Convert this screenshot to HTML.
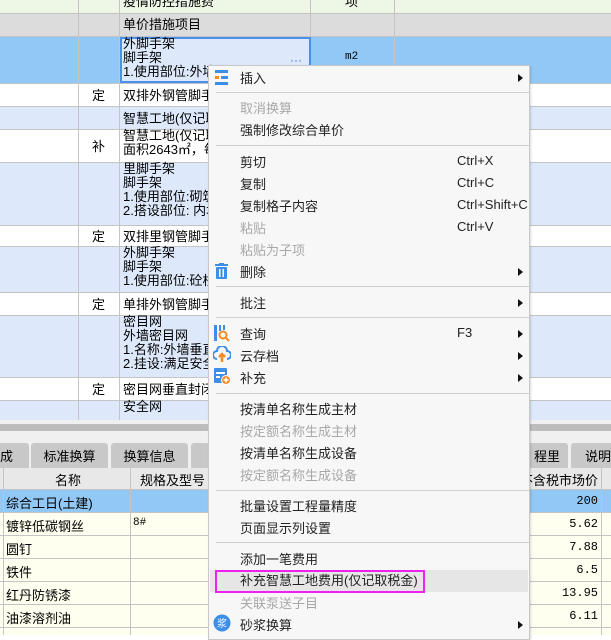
<!DOCTYPE html>
<html><head><meta charset="utf-8"><style>
*{margin:0;padding:0;box-sizing:border-box}
body{width:611px;height:635px;overflow:hidden;position:relative;background:#fff;font-family:"Liberation Sans","Noto Sans CJK SC",sans-serif;font-size:13px;color:#000}
.a{position:absolute}
.u{margin-top:-2px}
.m{position:absolute;left:240px;font-size:13px;color:#222;white-space:nowrap;margin-top:-2px}
.d{color:#a8a8a8}
.s{position:absolute;left:216px;width:313px;height:1px;background:#d0d0d0}
.k{position:absolute;left:457px;color:#222;margin-top:-1px}
.r{position:absolute;left:518px;width:0;height:0;border-top:4px solid transparent;border-bottom:4px solid transparent;border-left:5px solid #111}
</style></head><body>
<div class="a" style="left:0;top:0;width:611px;height:14px;background:#eef7e6"></div>
<div class="a" style="left:0;top:14px;width:611px;height:23px;background:#dcdcdc"></div>
<div class="a" style="left:0;top:37px;width:611px;height:47px;background:#91c8f5"></div>
<div class="a" style="left:0;top:107px;width:611px;height:23px;background:#dde9fb"></div>
<div class="a" style="left:0;top:163px;width:611px;height:63px;background:#dde9fb"></div>
<div class="a" style="left:0;top:247px;width:611px;height:46px;background:#dde9fb"></div>
<div class="a" style="left:0;top:316px;width:611px;height:62px;background:#dde9fb"></div>
<div class="a" style="left:0;top:401px;width:611px;height:20px;background:#dde9fb"></div>
<div class="a" style="left:0;top:84px;width:611px;height:23px;background:#fff"></div>
<div class="a" style="left:0;top:130px;width:611px;height:33px;background:#fff"></div>
<div class="a" style="left:0;top:226px;width:611px;height:21px;background:#fff"></div>
<div class="a" style="left:0;top:293px;width:611px;height:23px;background:#fff"></div>
<div class="a" style="left:0;top:378px;width:611px;height:23px;background:#fff"></div>
<div class="a" style="left:0;top:13px;width:611px;height:1px;background:#c4c4c4"></div>
<div class="a" style="left:0;top:36px;width:611px;height:1px;background:#c4c4c4"></div>
<div class="a" style="left:0;top:83px;width:611px;height:1px;background:#c4c4c4"></div>
<div class="a" style="left:0;top:106px;width:611px;height:1px;background:#c4c4c4"></div>
<div class="a" style="left:0;top:129px;width:611px;height:1px;background:#c4c4c4"></div>
<div class="a" style="left:0;top:162px;width:611px;height:1px;background:#c4c4c4"></div>
<div class="a" style="left:0;top:225px;width:611px;height:1px;background:#c4c4c4"></div>
<div class="a" style="left:0;top:246px;width:611px;height:1px;background:#c4c4c4"></div>
<div class="a" style="left:0;top:292px;width:611px;height:1px;background:#c4c4c4"></div>
<div class="a" style="left:0;top:315px;width:611px;height:1px;background:#c4c4c4"></div>
<div class="a" style="left:0;top:377px;width:611px;height:1px;background:#c4c4c4"></div>
<div class="a" style="left:0;top:400px;width:611px;height:1px;background:#c4c4c4"></div>
<div class="a" style="left:78px;top:0;width:1px;height:421px;background:#c4c4c4"></div>
<div class="a" style="left:119px;top:0;width:1px;height:421px;background:#c4c4c4"></div>
<div class="a" style="left:310px;top:0;width:1px;height:421px;background:#c4c4c4"></div>
<div class="a" style="left:394px;top:0;width:1px;height:421px;background:#c4c4c4"></div>
<div class="a" style="left:120px;top:37px;width:191px;height:46px;background:#dde9fb;border:2px solid #4a90e8"></div>
<div class="a" style="left:290px;top:53px;color:#3a7bd5;font-size:12px">···</div>
<div class="a" style="left:123px;top:-9px;font-size:13px">疫情防控措施费</div>
<div class="a" style="left:345px;top:-9px;font-size:13px">项</div>
<div class="a u" style="left:123px;top:16px">单价措施项目</div>
<div class="a u" style="left:123px;top:39px;line-height:14px">外脚手架<br>脚手架<br>1.使用部位:外墙</div>
<div class="a u" style="left:345px;top:53px;font-family:'Liberation Mono',monospace;font-size:11px">m2</div>
<div class="a u" style="left:92px;top:87px">定</div><div class="a u" style="left:123px;top:87px">双排外钢管脚手架</div>
<div class="a u" style="left:123px;top:110px">智慧工地(仅记取</div>
<div class="a u" style="left:92px;top:138px">补</div><div class="a u" style="left:123px;top:131px;line-height:14px">智慧工地(仅记取<br>面积2643㎡，每平</div>
<div class="a u" style="left:123px;top:164px;line-height:14px">里脚手架<br>脚手架<br>1.使用部位:砌筑<br>2.搭设部位: 内墙</div>
<div class="a u" style="left:92px;top:228px">定</div><div class="a u" style="left:123px;top:228px">双排里钢管脚手架</div>
<div class="a u" style="left:123px;top:248px;line-height:14px">外脚手架<br>脚手架<br>1.使用部位:砼柱</div>
<div class="a u" style="left:92px;top:296px">定</div><div class="a u" style="left:123px;top:296px">单排外钢管脚手架</div>
<div class="a u" style="left:123px;top:317px;line-height:14px">密目网<br>外墙密目网<br>1.名称:外墙垂直<br>2.挂设:满足安全</div>
<div class="a u" style="left:92px;top:381px">定</div><div class="a u" style="left:123px;top:381px">密目网垂直封闭</div>
<div class="a u" style="left:123px;top:402px;line-height:14px">安全网</div>
<div class="a" style="left:0;top:420px;width:611px;height:18px;background:#f0f0f0"></div>
<div class="a" style="left:0;top:424px;width:611px;height:7px;background:#bdbdbd"></div>
<div class="a" style="left:0;top:438px;width:611px;height:30px;background:#f0f0f0"></div>
<div class="a" style="left:-10px;top:443px;width:39px;height:25px;background:#c8c8c8;border-radius:3px 3px 0 0;padding:3px 0 0 10px">成</div>
<div class="a" style="left:31px;top:443px;width:77px;height:25px;background:#c8c8c8;border-radius:3px 3px 0 0;text-align:center;padding-top:3px">标准换算</div>
<div class="a" style="left:111px;top:443px;width:77px;height:25px;background:#c8c8c8;border-radius:3px 3px 0 0;text-align:center;padding-top:3px">换算信息</div>
<div class="a" style="left:191px;top:443px;width:30px;height:25px;background:#c8c8c8;border-radius:3px 3px 0 0"></div>
<div class="a" style="left:500px;top:443px;width:68px;height:25px;background:#c8c8c8;border-radius:3px 3px 0 0;text-align:right;padding:3px 8px 0 0">程里</div>
<div class="a" style="left:571px;top:443px;width:50px;height:25px;background:#c8c8c8;border-radius:3px 3px 0 0;padding:3px 0 0 14px">说明</div>
<div class="a" style="left:0;top:468px;width:611px;height:22px;background:#e8e8e8;border-bottom:1px solid #c4c4c4"></div>
<div class="a" style="left:55px;top:470px">名称</div>
<div class="a" style="left:140px;top:470px">规格及型号</div>
<div class="a" style="left:520px;top:470px">不含税市场价</div>
<div class="a" style="left:0;top:490px;width:611px;height:23px;background:#91c8f5"></div>
<div class="a" style="left:0;top:513px;width:611px;height:122px;background:#fffff0"></div>
<div class="a" style="left:0;top:512px;width:611px;height:1px;background:#c4c4c4"></div>
<div class="a" style="left:0;top:535px;width:611px;height:1px;background:#c4c4c4"></div>
<div class="a" style="left:0;top:558px;width:611px;height:1px;background:#c4c4c4"></div>
<div class="a" style="left:0;top:581px;width:611px;height:1px;background:#c4c4c4"></div>
<div class="a" style="left:0;top:604px;width:611px;height:1px;background:#c4c4c4"></div>
<div class="a" style="left:0;top:627px;width:611px;height:1px;background:#c4c4c4"></div>
<div class="a" style="left:3px;top:468px;width:1px;height:167px;background:#c4c4c4"></div>
<div class="a" style="left:130px;top:468px;width:1px;height:167px;background:#c4c4c4"></div>
<div class="a" style="left:601px;top:468px;width:1px;height:167px;background:#c4c4c4"></div>
<div class="a" style="left:6px;top:493px">综合工日(土建)</div>
<div class="a" style="left:6px;top:516px">镀锌低碳钢丝</div>
<div class="a" style="left:133px;top:517px;font-family:'Liberation Mono',monospace;font-size:11px">8#</div>
<div class="a" style="left:6px;top:539px">圆钉</div>
<div class="a" style="left:6px;top:562px">铁件</div>
<div class="a" style="left:6px;top:585px">红丹防锈漆</div>
<div class="a" style="left:6px;top:608px">油漆溶剂油</div>
<div class="a" style="left:540px;top:494px;width:58px;text-align:right;font-family:'Liberation Mono',monospace;font-size:12px">200</div>
<div class="a" style="left:540px;top:517px;width:58px;text-align:right;font-family:'Liberation Mono',monospace;font-size:12px">5.62</div>
<div class="a" style="left:540px;top:540px;width:58px;text-align:right;font-family:'Liberation Mono',monospace;font-size:12px">7.88</div>
<div class="a" style="left:540px;top:563px;width:58px;text-align:right;font-family:'Liberation Mono',monospace;font-size:12px">6.5</div>
<div class="a" style="left:540px;top:586px;width:58px;text-align:right;font-family:'Liberation Mono',monospace;font-size:12px">13.95</div>
<div class="a" style="left:540px;top:609px;width:58px;text-align:right;font-family:'Liberation Mono',monospace;font-size:12px">6.11</div>

<div class="a" style="left:208px;top:65px;width:322px;height:575px;background:#f7f7f7;border:1px solid #c8c8c8;box-shadow:1px 1px 2px rgba(0,0,0,.15)"></div>
<svg class="a" style="left:214px;top:69px" width="16" height="18"><rect x="1" y="1" width="13" height="3" fill="#3d8ee8"/><rect x="1" y="7" width="4" height="3" fill="#f28c28"/><rect x="7" y="7" width="7" height="3" fill="#3d8ee8"/><rect x="1" y="13" width="13" height="3" fill="#3d8ee8"/></svg>
<div class="m" style="top:70px">插入</div><div class="r" style="top:74px"></div>
<div class="s" style="top:92px"></div>
<div class="m d" style="top:100px">取消换算</div>
<div class="m" style="top:122px">强制修改综合单价</div>
<div class="s" style="top:145px"></div>
<div class="m" style="top:154px">剪切</div><div class="k" style="top:154px">Ctrl+X</div>
<div class="m" style="top:176px">复制</div><div class="k" style="top:176px">Ctrl+C</div>
<div class="m" style="top:198px">复制格子内容</div><div class="k" style="top:198px">Ctrl+Shift+C</div>
<div class="m d" style="top:220px">粘贴</div><div class="k d" style="top:220px">Ctrl+V</div>
<div class="m d" style="top:242px">粘贴为子项</div>
<svg class="a" style="left:214px;top:263px" width="16" height="17"><rect x="1" y="1" width="13" height="2" fill="#3d8ee8"/><rect x="5" y="0" width="5" height="2" fill="#3d8ee8"/><rect x="2" y="4" width="11" height="12" rx="1" fill="#3d8ee8"/><rect x="5" y="6" width="1.5" height="8" fill="#fff"/><rect x="8.5" y="6" width="1.5" height="8" fill="#fff"/></svg>
<div class="m" style="top:264px">删除</div><div class="r" style="top:268px"></div>
<div class="s" style="top:286px"></div>
<div class="m" style="top:295px">批注</div><div class="r" style="top:299px"></div>
<div class="s" style="top:317px"></div>
<svg class="a" style="left:214px;top:325px" width="16" height="17"><rect x="0" y="0" width="3" height="16" fill="#3d8ee8"/><rect x="5" y="0" width="2" height="6" fill="#3d8ee8"/><rect x="9" y="0" width="2" height="5" fill="#3d8ee8"/><circle cx="9" cy="10" r="3.5" fill="none" stroke="#f28c28" stroke-width="2"/><line x1="11.5" y1="12.5" x2="15" y2="16" stroke="#f28c28" stroke-width="2"/></svg>
<div class="m" style="top:326px">查询</div><div class="k" style="top:326px">F3</div><div class="r" style="top:330px"></div>
<svg class="a" style="left:213px;top:346px" width="18" height="17"><path d="M4 13 A4 4 0 0 1 4 5 A5 5 0 0 1 14 5 A4 4 0 0 1 14 13" fill="none" stroke="#3d8ee8" stroke-width="2"/><path d="M9 16 V9 M6 11 L9 8 L12 11" fill="none" stroke="#f28c28" stroke-width="2.5"/></svg>
<div class="m" style="top:348px">云存档</div><div class="r" style="top:352px"></div>
<svg class="a" style="left:214px;top:368px" width="17" height="17"><rect x="0" y="0" width="13" height="15" rx="1" fill="#3d8ee8"/><rect x="2" y="4" width="9" height="2" fill="#fff"/><rect x="2" y="8" width="4" height="2" fill="#fff"/><circle cx="12" cy="12" r="4.5" fill="#f28c28" stroke="#fff" stroke-width="1"/><path d="M12 9.5v5M9.5 12h5" stroke="#fff" stroke-width="1.5"/></svg>
<div class="m" style="top:370px">补充</div><div class="r" style="top:374px"></div>
<div class="s" style="top:393px"></div>
<div class="m" style="top:401px">按清单名称生成主材</div>
<div class="m d" style="top:423px">按定额名称生成主材</div>
<div class="m" style="top:445px">按清单名称生成设备</div>
<div class="m d" style="top:467px">按定额名称生成设备</div>
<div class="s" style="top:490px"></div>
<div class="m" style="top:498px">批量设置工程量精度</div>
<div class="m" style="top:520px">页面显示列设置</div>
<div class="s" style="top:542px"></div>
<div class="m" style="top:551px">添加一笔费用</div>
<div class="a" style="left:210px;top:570px;width:318px;height:22px;background:#e6e6e6"></div>
<div class="a" style="left:215px;top:570px;width:210px;height:23px;border:2px solid #f020f0"></div>
<div class="m" style="top:572px">补充智慧工地费用(仅记取税金)</div>
<div class="m d" style="top:595px">关联泵送子目</div>
<svg class="a" style="left:213px;top:614px" width="18" height="18"><circle cx="9" cy="9" r="8.5" fill="#3d8ee8"/><text x="9" y="13" font-size="10" fill="#fff" text-anchor="middle" font-family="Noto Sans CJK SC">浆</text></svg>
<div class="m" style="top:617px">砂浆换算</div><div class="r" style="top:621px"></div>
</body></html>
